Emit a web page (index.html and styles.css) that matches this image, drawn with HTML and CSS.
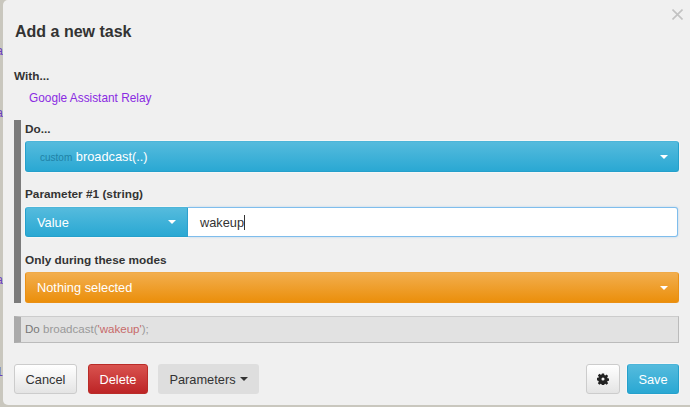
FILE: index.html
```html
<!DOCTYPE html>
<html lang="en">
<head>
  <meta charset="UTF-8">
  <title>Add a new task</title>
  <link rel="stylesheet" href="styles.css">
</head>
<body>
  <div class="backdrop">
    <span class="peek peek-1">a</span>
    <span class="peek peek-2">a</span>
    <span class="peek peek-3">a</span>
    <span class="peek peek-4">1</span>
  </div>
  <div class="modal">
    <svg class="close" width="11" height="11" viewBox="0 0 11 11"><path d="M0.5 0.5L10.5 10.5M10.5 0.5L0.5 10.5" stroke="#c2c2c2" stroke-width="1.6" fill="none"/></svg>
    <h1>Add a new task</h1>
    <div class="label with-label">With...</div>
    <div class="device">Google Assistant Relay</div>

    <div class="task-box">
      <div class="label do-label">Do...</div>
      <div class="btn btn-info select">
        <span><span class="tag">custom</span> broadcast(..)</span>
        <span class="caret"></span>
      </div>
      <div class="label param-label">Parameter #1 (string)</div>
      <div class="param-row">
        <div class="btn btn-info param-type">
          <span>Value</span>
          <span class="caret"></span>
        </div>
        <div class="param-input">wakeup<span class="cursor"></span></div>
      </div>
      <div class="label modes-label">Only during these modes</div>
      <div class="btn btn-warning select">
        <span>Nothing selected</span>
        <span class="caret"></span>
      </div>
    </div>

    <div class="preview">Do <span class="fn">broadcast(<span class="str">'wakeup'</span>);</span></div>

    <div class="footer">
      <div class="btn btn-default cancel">Cancel</div>
      <div class="btn btn-danger delete">Delete</div>
      <div class="btn btn-flat params">Parameters <span class="caret caret-dark"></span></div>
      <div class="spacer"></div>
      <div class="btn btn-default gear">
        <svg width="12" height="12" viewBox="0 0 14 14"><path fill="#222" fill-rule="evenodd" d="M5.7 0.500h2.600l.3 1.900 1 .4 1.600-1.100 1.800 1.800-1.100 1.600.4 1 1.900.3v2.600l-1.900.3-.4 1 1.100 1.600-1.800 1.800-1.600-1.100-1 .4-.3 1.900H5.700l-.3-1.900-1-.4-1.600 1.100-1.800-1.800 1.100-1.600-.4-1L-.2 8.300V5.700l1.900-.3.4-1-1.100-1.600 1.800-1.800 1.600 1.100 1-.4zM7 5.200a1.800 1.800 0 1 0 0 3.600 1.800 1.800 0 0 0 0-3.600z"/></svg>
      </div>
      <div class="btn btn-info save">Save</div>
    </div>
  </div>
</body>
</html>
```

FILE: styles.css
```css
html, body {
  margin: 0;
  height: 100%;
}
body {
  display: flex;
  width: 690px;
  height: 407px;
  overflow: hidden;
  background: #c9c7be;
  font-family: 'Liberation Sans', Arial, sans-serif;
  font-size: 13px;
  color: #333;
}
.backdrop {
  position: relative;
  width: 3px;
  flex: none;
  overflow: hidden;
}
.peek {
  position: absolute;
  right: 0;
  font-size: 12px;
  line-height: 14px;
  color: #6a3fc0;
}
.peek-1 { top: 44px; }
.peek-2 { top: 106px; }
.peek-3 { top: 273px; }
.peek-4 { top: 365px; }

.modal {
  position: relative;
  flex: none;
  box-sizing: border-box;
  width: 690px;
  height: 405px;
  padding: 0 8px 0 11px;
  background: #f0f0f0;
  border-radius: 5px 0 0 5px;
}
.close {
  position: absolute;
  top: 9px;
  right: 10px;
}
h1 {
  margin: 0 0 0 1px;
  padding-top: 23px;
  font-size: 16px;
  line-height: 18px;
  font-weight: bold;
}
.label {
  font-weight: bold;
  font-size: 11.8px;
  line-height: 14px;
}
.with-label {
  margin-top: 28px;
}
.device {
  margin: 8px 0 0 15px;
  font-size: 11.85px;
  line-height: 14px;
  color: #8a2be2;
}
.task-box {
  margin-top: 15px;
  padding-left: 4px;
  border-left: 7px solid #7b7b7b;
}
.do-label {
  padding-top: 2px;
}
.btn {
  box-sizing: border-box;
  display: flex;
  align-items: center;
  border-radius: 3px;
  font-size: 12.8px;
  color: #fff;
}
.btn-info {
  background: linear-gradient(#55bbdd, #2aa8d3);
  border: 1px solid #25a0cb;
  border-top-color: #4cb5d9;
  box-shadow: 0 0 0 1px rgba(255, 255, 255, 0.4);
}
.btn-warning {
  background: linear-gradient(#f2ae4e, #eb8f0b);
  border: 1px solid #ea9015;
  border-top-color: #f0aa48;
}
.btn-default {
  justify-content: center;
  height: 30px;
  color: #333;
  background: linear-gradient(#fff, #e4e4e4);
  border: 1px solid #ccc;
}
.btn-danger {
  justify-content: center;
  height: 30px;
  background: linear-gradient(#d9534f, #bd2426);
  border: 1px solid #b92c28;
}
.btn-flat {
  justify-content: center;
  height: 30px;
  color: #333;
  background: #dedede;
  gap: 4px;
}
.select {
  justify-content: space-between;
  width: 654px;
  height: 31px;
  margin-top: 5px;
  padding: 0 10px 0 11px;
}
.tag {
  font-size: 10px;
  color: #2082a6;
  margin-left: 3px;
}
.caret {
  width: 0;
  height: 0;
  border-left: 4px solid transparent;
  border-right: 4px solid transparent;
  border-top: 4px solid #fff;
}
.caret-dark {
  border-top-color: #333;
}
.param-label {
  margin-top: 15px;
}
.param-row {
  display: flex;
  margin-top: 6px;
  width: 654px;
  height: 30px;
}
.param-type {
  flex: none;
  justify-content: space-between;
  width: 163px;
  height: 30px;
  padding: 0 11px;
  border-radius: 3px 0 0 3px;
}
.param-input {
  flex: 1;
  display: flex;
  align-items: center;
  padding-left: 12px;
  background: #fff;
  border: 1px solid #7fbdec;
  border-left: none;
  border-radius: 0 3px 3px 0;
  box-shadow: 0 0 2px rgba(102, 175, 233, 0.5);
  margin-right: 1px;
  font-size: 12.8px;
}
.cursor {
  width: 1px;
  height: 15px;
  background: #333;
}
.modes-label {
  margin-top: 16px;
}
.modes-label + .select {
  margin-top: 5px;
}
.preview {
  box-sizing: border-box;
  width: 665px;
  height: 27px;
  margin-top: 13px;
  padding-left: 4px;
  font-size: 11.55px;
  line-height: 25px;
  color: #777;
  background: #e2e2e2;
  border: 1px solid #bbb;
  border-top-color: #ccc;
  border-left: 7px solid #aaa;
}
.fn {
  color: #999;
}
.str {
  color: #c76a6a;
}
.footer {
  display: flex;
  width: 665px;
  margin-top: 21px;
}
.cancel {
  width: 63px;
}
.delete {
  width: 60px;
  margin-left: 11px;
}
.params {
  width: 101px;
  margin-left: 10px;
}
.spacer {
  flex: 1;
}
.gear {
  width: 34px;
}
.save {
  justify-content: center;
  width: 52px;
  height: 30px;
  margin-left: 7px;
}
```
